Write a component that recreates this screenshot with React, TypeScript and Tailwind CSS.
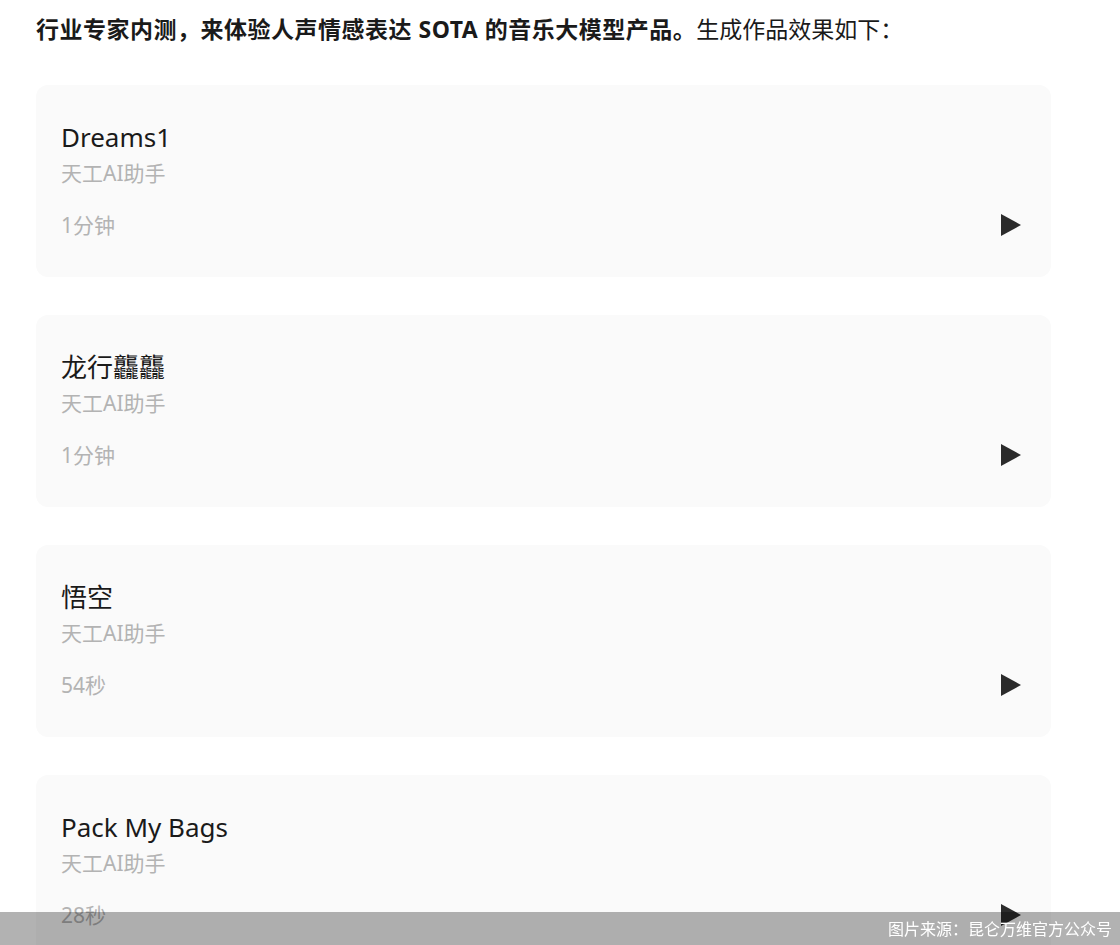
import { Play } from "lucide-react";

const songs = [
  { title: "Dreams1", author: "天工AI助手", length: "1分钟" },
  { title: "龙行龘龘", author: "天工AI助手", length: "1分钟" },
  { title: "悟空", author: "天工AI助手", length: "54秒" },
  { title: "Pack My Bags", author: "天工AI助手", length: "28秒" },
];

const font = {
  fontFamily: '"Noto Sans", "Noto Sans CJK SC", sans-serif',
};

const SongCard = ({ title, author, length }: { title: string; author: string; length: string }) => (
  <div className="w-[1015px] rounded-xl bg-[#fafafa] pl-[25px] pr-[30px] pt-[34px] pb-[34px]">
    <p className="text-[26px] leading-[36px] text-[#1a1a1a]">{title}</p>
    <p className="text-[21px] leading-[36px] text-[#b3b3b3]">{author}</p>
    <div className="mt-4 flex items-center justify-between">
      <span className="text-[21px] leading-[36px] text-[#b3b3b3]">{length}</span>
      <svg width="20" height="22" viewBox="0 0 20 22" className="text-[#2b2b2b]">
        <path d="M0 0 L20 11 L0 22 Z" fill="currentColor" />
      </svg>
    </div>
  </div>
);

export default function App() {
  return (
    <div className="min-h-screen bg-white px-[36px] pt-[11px]" style={font}>
      <p className="text-[23px] leading-[36px] text-[#1a1a1a]">
        <strong className="font-bold tracking-[0.5px]">
          行业专家内测，来体验人声情感表达 SOTA 的音乐大模型产品。
        </strong>
        生成作品效果如下：
      </p>

      <div className="mt-[38px] flex flex-col gap-[38px]">
        {songs.map((s) => (
          <SongCard key={s.title} {...s} />
        ))}
      </div>

      {/* caption strip over the bottom of the page */}
      <div className="fixed bottom-0 left-0 right-0 flex h-[33px] items-center justify-end bg-black/30 pr-2">
        <span className="text-[16px] text-white">图片来源：昆仑万维官方公众号</span>
      </div>
    </div>
  );
}
